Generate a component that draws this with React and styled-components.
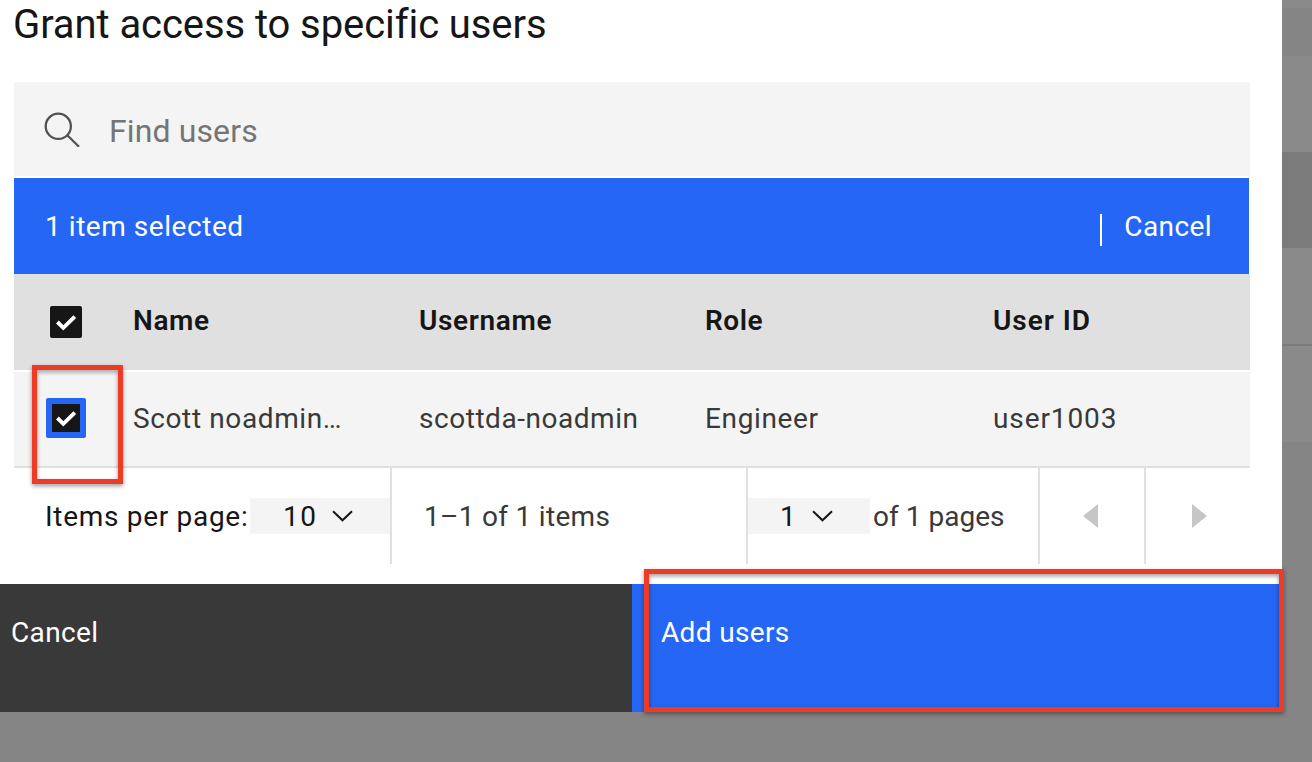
import React from "react";
import styled, { createGlobalStyle } from "styled-components";

const GlobalStyle = createGlobalStyle`
  *, *::before, *::after { box-sizing: border-box; }
  body { margin: 0; background: #858585; font-family: Roboto, "Liberation Sans", sans-serif; font-size: 28px; color: #161616; }
  button { font: inherit; border: 0; background: none; padding: 0; }
`;

const Page = styled.div`
  position: relative;
  display: flex;
  align-items: flex-start;
  width: 1312px;
  height: 762px;
  overflow: hidden;
`;

const Dialog = styled.section`
  width: 1282px;
  height: 712px;
  background: #fff;
`;

const Backdrop = styled.aside`
  flex: 1;
  display: flex;
  flex-direction: column;
`;

const BackdropBand = styled.div`
  height: ${(p) => p.$height}px;
  background: ${(p) => p.$color};
`;

const Label = styled.span`
  white-space: pre;
  line-height: 36px;
  letter-spacing: ${(p) => p.$track || 0}px;
`;

const Content = styled.div`
  padding-left: 14px;
  height: 584px;
`;

const Title = styled.h1`
  margin: 0 0 33px -1px;
  padding-top: 1px;
  height: 49px;
  font-size: 40px;
  line-height: 47px;
  font-weight: 400;
  letter-spacing: -0.08px;
  font-variant-ligatures: common-ligatures;
  white-space: nowrap;
`;

const SearchBar = styled.div`
  display: flex;
  align-items: center;
  width: 1236px;
  height: 94px;
  padding-left: 30px;
  margin-bottom: 2px;
  background: #f4f4f4;
  color: #757575;
  font-size: 32px;

  svg { margin-right: 27px; }
  span { padding-top: 3px; }
`;

const BatchBar = styled.div`
  display: flex;
  align-items: center;
  justify-content: space-between;
  width: 1235px;
  height: 96px;
  padding: 0 37px 0 31px;
  background: #2566f5;
  color: #fff;

  ${Label} { padding-top: 1px; }
`;

const BatchCancel = styled.button`
  display: flex;
  align-items: center;
  gap: 22px;
  color: inherit;

  &::before {
    content: "";
    width: 2px;
    height: 32px;
    margin-top: 8px;
    background: #fff;
  }
`;

const Row = styled.div`
  display: grid;
  grid-template-columns: 119px 286px 286px 288px 1fr;
  align-items: center;
  width: 1236px;
`;

const HeaderRow = styled(Row)`
  height: 98px;
  background: #e0e0e0;
  font-weight: 600;
  border-bottom: 2px solid #fff;

  ${Label} { padding-bottom: 3px; }
`;

const BodyRow = styled(Row)`
  height: 96px;
  background: #f4f4f4;
  color: #393939;
  border-bottom: 2px solid #e0e0e0;

  ${Label} { padding-bottom: 1px; }
`;

const Checkbox = styled.div`
  display: flex;
  width: 32px;
  height: 32px;
  margin-left: 36px;
  border-radius: 2px;
  background: #161616;
  ${(p) =>
    p.$focused &&
    `
    width: 40px;
    height: 40px;
    margin: 0 0 2px 32px;
    padding: 4px;
    background: #2566f5;
    svg { background: linear-gradient(#161616, #161616) center / 28px 28px no-repeat; }
  `}
`;

const Pagination = styled.div`
  display: flex;
  align-items: center;
  width: 1236px;
  height: 96px;
  color: #393939;

  ${Label} { padding-top: 2px; }
`;

const PageCell = styled.div`
  display: flex;
  align-items: center;
  width: ${(p) => p.$width}px;
  height: 96px;
  padding-left: ${(p) => p.$indent || 0}px;
  border-right: ${(p) => (p.$last ? 0 : "2px solid #e0e0e0")};
`;

const Select = styled.div`
  display: flex;
  align-items: center;
  justify-content: space-between;
  width: ${(p) => p.$width}px;
  height: 36px;
  margin-left: auto;
  padding: 0 37px 0 33px;
  background: #f4f4f4;
  color: #161616;
`;

const PageSelect = styled(Select)`
  margin: 0 3px 0 0;
  padding-left: 32px;
`;

const Dark = styled(Label)`
  color: #161616;
`;

const Footer = styled.footer`
  display: flex;
  height: 128px;
`;

const Action = styled.button`
  display: flex;
  align-items: flex-start;
  width: ${(p) => p.$width}px;
  padding: 31px 0 0 ${(p) => p.$indent}px;
  background: ${(p) => p.$color};
  color: #fff;
`;

const Highlight = styled.div`
  position: absolute;
  left: ${(p) => p.$x}px;
  top: ${(p) => p.$y}px;
  width: ${(p) => p.$width}px;
  height: ${(p) => p.$height}px;
  border: 5px solid #ed3b26;
  filter: drop-shadow(0 2px 2px rgba(0, 0, 0, 0.4));
  pointer-events: none;
`;

const SearchIcon = () => (
  <svg width="38" height="36" viewBox="0 0 38 36" fill="none" stroke="#525252" strokeWidth="2.3">
    <circle cx="14.3" cy="15.3" r="12.6" />
    <path d="M23.3 24.3 35 35.7" />
  </svg>
);

const CheckMark = () => (
  <svg width="32" height="32" viewBox="0 0 32 32" fill="none" stroke="#fff" strokeWidth="3.9">
    <path d="M7.4 16 13.3 21.8 24.8 10.6" />
  </svg>
);

const Chevron = () => (
  <svg width="21" height="12" viewBox="0 0 21 12" fill="none" stroke="#161616" strokeWidth="2">
    <path d="M1 1.2 10.5 10.3 20 1.2" />
  </svg>
);

const Caret = ({ flip }) => (
  <svg width="15" height="24" viewBox="0 0 15 24" fill="#c6c6c6">
    <path d={flip ? "M0 0 15 12 0 24Z" : "M15 0 0 12 15 24Z"} />
  </svg>
);

const bands = [
  [8, "#8a8a8a"],
  [48, "#858585"],
  [96, "#8a8a8a"],
  [96, "#7b7b7b"],
  [96, "#8a8a8a"],
  [2, "#7b7b7b"],
  [96, "#8a8a8a"],
];

export default function App() {
  return (
    <>
      <GlobalStyle />
      <Page>
        <Dialog>
          <Content>
            <Title>Grant access to specific users</Title>
            <SearchBar>
              <SearchIcon />
              <Label $track={0.12}>Find users</Label>
            </SearchBar>
            <BatchBar>
              <Label $track={0.55}>1 item selected</Label>
              <BatchCancel>
                <Label $track={0.4}>Cancel</Label>
              </BatchCancel>
            </BatchBar>
            <HeaderRow>
              <Checkbox><CheckMark /></Checkbox>
              <Label $track={0.6}>Name</Label>
              <Label $track={0.65}>Username</Label>
              <Label $track={0.55}>Role</Label>
              <Label $track={0.95}>User ID</Label>
            </HeaderRow>
            <BodyRow>
              <Checkbox $focused><CheckMark /></Checkbox>
              <Label $track={0.62}>Scott noadmin…</Label>
              <Label $track={0.54}>scottda-noadmin</Label>
              <Label $track={0.65}>Engineer</Label>
              <Label $track={0.9}>user1003</Label>
            </BodyRow>
            <Pagination>
              <PageCell $width={378} $indent={31}>
                <Dark $track={0.7}>Items per page:</Dark>
                <Select $width={140}>
                  <Label $track={1.5}>10</Label>
                  <Chevron />
                </Select>
              </PageCell>
              <PageCell $width={356} $indent={32}>
                <Label $track={0.3}>1–1 of 1 items</Label>
              </PageCell>
              <PageCell $width={292}>
                <PageSelect $width={122}>
                  <Label>1</Label>
                  <Chevron />
                </PageSelect>
                <Label $track={0.02}>of 1 pages</Label>
              </PageCell>
              <PageCell $width={106} $indent={43}><Caret /></PageCell>
              <PageCell $width={104} $indent={46} $last><Caret flip /></PageCell>
            </Pagination>
          </Content>
          <Footer>
            <Action $width={632} $indent={11} $color="#393939">
              <Label $track={0.35}>Cancel</Label>
            </Action>
            <Action $width={650} $indent={29} $color="#2566f5">
              <Label $track={0.35}>Add users</Label>
            </Action>
          </Footer>
        </Dialog>
        <Backdrop>
          {bands.map(([height, color], i) => (
            <BackdropBand key={i} $height={height} $color={color} />
          ))}
        </Backdrop>
        <Highlight $x={32} $y={365} $width={91} $height={119} />
        <Highlight $x={644} $y={569} $width={640} $height={143} />
      </Page>
    </>
  );
}
